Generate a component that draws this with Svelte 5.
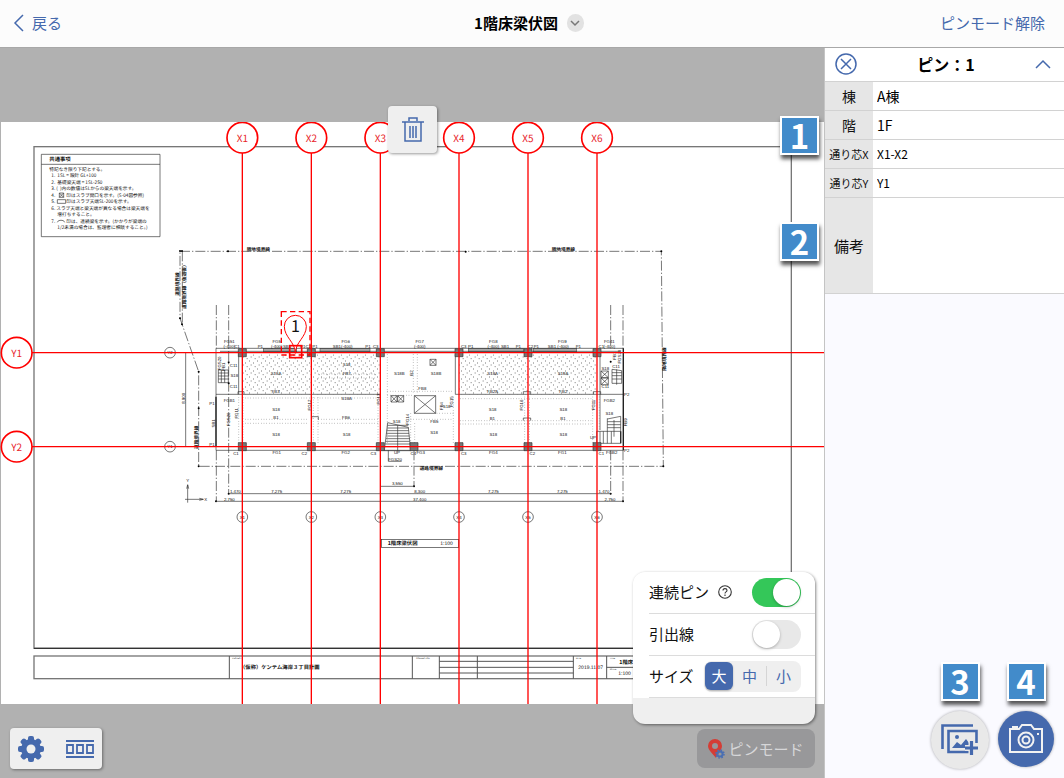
<script>
  let title = '1階床梁伏図';
  let pin = { building: 'A棟', floor: '1F', x: 'X1-X2', y: 'Y1', memo: '' };
  let repeatPin = true;
  let leader = false;
  let size = '大';
  const sizes = ['大', '中', '小'];

  // the sheet is drawn in thirds of a pixel
  const gridX = [727, 934, 1141, 1377, 1584, 1791];
  const gridY = [1058, 1340];

  const notes = [
    [148, '特記なき限り下記とする。'],
    [154, '1.  1SL = 設計 GL+100'],
    [154, '2.  基礎梁天端 = 1SL-250'],
    [154, '3. (  )内の数値はSLからの梁天端を示す。'],
    [154, '4.'],
    [154, '5.'],
    [154, '6. スラブ天端と梁天端が異なる場合は梁天端を'],
    [172, '増打ちすること。'],
    [154, '7.'],
    [172, '1/2未満の場合は、監理者に相談すること。)']
  ];

  const labels = [
    [688, 1030, 'FG51'], [688, 1043, '(-400)'], [711, 1043, 'C1'], [781, 1043, 'P1'],
    [830, 1030, 'FG5'], [830, 1043, '(-400)'], [861, 1043, 'SB1'],
    [908, 1043, 'P1'], [925, 1043, 'C2'], [945, 1043, 'P1'],
    [1037, 1030, 'FG6'], [1028, 1043, 'SB1(-400)'], [1104, 1043, 'P1'], [1127, 1043, 'C3'],
    [1259, 1030, 'FG7'], [1259, 1043, '(-400)'],
    [1391, 1043, 'C3'], [1412, 1043, 'P1'], [1480, 1030, 'FG8'], [1480, 1043, '(-400)'], [1515, 1043, 'SB1'],
    [1555, 1043, 'P1'], [1591, 1043, 'C2'], [1609, 1043, 'P1'],
    [1687, 1030, 'FG9'], [1675, 1043, 'SB1 (-400)'], [1735, 1043, 'P1'], [1804, 1043, 'C1'],
    [1828, 1030, 'FG41'], [1828, 1043, '(-400)'],
    [828, 1125, 'S18A'], [1040, 1098, 'S18'], [1040, 1125, 'FB7'], [1198, 1124, 'S18B'],
    [1308, 1124, 'S18B'], [1478, 1125, 'S18A'], [1689, 1125, 'S18A'],
    [701, 1102, 'C11'], [703, 1130, 'S18'], [701, 1164, 'C11'], [1267, 1170, 'FB8'],
    [827, 1180, 'FB3'], [1040, 1201, 'S18A'], [688, 1205, 'FGB1'], [636, 1214, 'P1'], [636, 1337, 'P1'],
    [828, 1232, 'S18'], [828, 1256, 'B1'], [1038, 1256, 'FB6'], [828, 1307, 'S18'], [1040, 1307, 'S18'],
    [1190, 1268, 'S18'], [1303, 1269, 'FB5'], [1302, 1301, 'S18'], [1340, 1225, 'S18'],
    [1478, 1180, 'FB2A'], [1690, 1180, 'FB2'], [1478, 1233, 'S18'], [1690, 1233, 'S18'],
    [1477, 1259, 'B1'], [1689, 1259, 'B1'], [1480, 1309, 'S18'], [1690, 1309, 'S18'],
    [1828, 1207, 'FGB2'], [1828, 1246, 'S18'], [1848, 1103, 'C11'], [1816, 1111, 'S18'], [1816, 1164, 'C11'],
    [1880, 1188, 'P2'], [1880, 1356, 'P2'], [1779, 1317, 'UP'],
    [708, 1364, 'C1'], [830, 1363, 'FG1'], [913, 1364, 'C2'], [1037, 1363, 'FG2'], [1120, 1364, 'C3'],
    [1191, 1363, 'UP'], [1185, 1382, 'FGS20'], [1240, 1364, 'C4'], [1262, 1363, 'FG3'],
    [1391, 1364, 'C3'], [1480, 1363, 'FG4'], [1597, 1364, 'C2'], [1687, 1363, 'FG1'], [1804, 1364, 'C1'], [1835, 1363, 'FGB2'],
    [706, 1479, '1,470'], [830, 1479, '7,275'], [1037, 1479, '7,275'], [1192, 1456, '3,550'], [1259, 1479, '8,300'],
    [1480, 1479, '7,275'], [1687, 1479, '7,275'], [1812, 1479, '1,470'],
    [688, 1502, '2,750'], [1259, 1502, '37,400'], [1830, 1502, '2,750'],
    [563, 1445, 'Y'], [617, 1503, 'X']
  ];

  const upright = [
    [664, 1090, 'FGS20'], [676, 1100, 'FB1'], [1240, 1119, 'B2'], [933, 1215, 'FG12'], [1139, 1197, 'FG13'], [714, 1240, 'FG11'],
    [689, 1258, 'FGS20'], [644, 1270, 'SB1'], [554, 1195, '8,900'], [1228, 1258, 'FG14'], [1359, 1205, 'FG15'],
    [1570, 1215, 'FG16'], [1784, 1215, 'FG11'], [1329, 1218, 'FB4'], [1881, 1267, 'FB9'], [1849, 1067, 'FB1'], [1864, 1070, 'FGS20']
  ];

  const cols = [...gridX.flatMap(x => gridY.map(y => [x, y])), [1242, 1340]];
  const beams = [[790, 100], [960, 150], [1405, 165], [1600, 130]];
  const dots = [
    [727, 1194, 1140, 1194], [727, 1258, 927, 1258], [727, 1270, 927, 1270], [955, 1258, 1134, 1258], [955, 1270, 1134, 1270],
    [716, 1183, 716, 1330], [729, 1183, 729, 1330], [940, 1183, 940, 1330], [954, 1183, 954, 1330], [1134, 1183, 1134, 1330],
    [955, 1122, 1130, 1122], [955, 1134, 1130, 1134],
    [1162, 1063, 1162, 1330], [1240, 1063, 1240, 1180], [1252, 1063, 1252, 1180], [1162, 1174, 1360, 1174], [1162, 1186, 1240, 1186],
    [1232, 1258, 1360, 1258], [1232, 1240, 1232, 1330], [1244, 1270, 1244, 1330], [1360, 1190, 1360, 1330], [1310, 1240, 1360, 1240],
    [1380, 1196, 1780, 1196], [1380, 1262, 1780, 1262], [1380, 1272, 1780, 1272],
    [1574, 1190, 1574, 1330], [1588, 1190, 1588, 1330], [1778, 1190, 1778, 1330], [1798, 1190, 1798, 1290]
  ];
  const crossed = [[1173, 1187, 18, 19], [1193, 1187, 18, 19], [1290, 1078, 18, 18], [1243, 1187, 64, 53], [1803, 1113, 22, 20], [1803, 1134, 22, 20]];
  const steps = [1276, 1284, 1292, 1300, 1308, 1316, 1324, 1332, 1340];
</script>

<svelte:head>
  <title>{title}</title>
</svelte:head>

<div class="app" lang="ja">
  <header>
    <button class="back" type="button">
      <svg width="12" height="20" viewBox="0 0 12 20"><path d="M10 2 2 10l8 8" /></svg>
      戻る
    </button>
    <h1>
      {title}
      <button class="more" type="button" aria-label="図面を選択">
        <svg width="10" height="8" viewBox="0 0 10 8"><path d="m1 2 4 4 4-4" /></svg>
      </button>
    </h1>
    <button class="end" type="button">ピンモード解除</button>
  </header>

  <main>
    <section class="viewer">
      <svg class="sheet" viewBox="0 366 2472 1746">
        <defs>
          <pattern id="slab" width="24" height="24" patternUnits="userSpaceOnUse">
            <path d="M3 3h3M15 9h3M8 15h3M20 20h3" stroke="#777" stroke-width="3" />
          </pattern>
        </defs>
        <rect x="3" y="366" width="2469" height="1746" fill="#fff" />

        <!-- frame and title block -->
        <g class="frame">
          <rect x="102" y="440" width="2272" height="1505" />
          <path d="M102 1945H2374" class="dark" />
          <rect x="102" y="1968" width="2272" height="68" />
          <path class="thin" d="M688 1968v68M1237 1968v68M1318 1968v68M1432 1968v68M1720 1968v68M1820 1968v68M1318 1984h402M1318 2002h402M1318 2019h402M1820 2002h554" />
        </g>
        <g class="t16">
          <text x="720" y="2007">（仮称）ケンテム海岸３丁目計画</text>
          <text x="1735" y="2007" class="num">2019.11.07</text>
          <text x="1858" y="1991">1階床梁伏図</text>
          <text x="1855" y="2024" class="num">1:100</text>
          <text x="1163" y="1636">1階床梁伏図</text>
          <text x="1321" y="1635" class="num">1:100</text>
        </g>
        <g class="t6">
          <text x="697" y="1976">PROJECT</text>
          <text x="1249" y="1976">CORRECTION</text>
          <text x="1728" y="1976">DATE</text>
          <text x="1829" y="1976">TITLE</text>
          <text x="1829" y="2010">SCALE</text>
        </g>
        <rect class="ink" x="1144" y="1618" width="232" height="24" />

        <!-- common notes -->
        <path class="ink" d="M124 463h356v247H124zM124 493h356" />
        <g class="t14">
          <text x="148" y="484" class="t16">共通事項</text>
          {#each notes as [x, line], i}
            <text {x} y={512 + i * 20 - Math.round(i / 2)}>{line}</text>
          {/each}
          <text x="199" y="590">印はスラブ開口を示す。(S-04図参照)</text>
          <text x="199" y="610">印はスラブ天端SL-200を示す。</text>
          <text x="199" y="668">印は、連続梁を示す。(かかりが梁端の</text>
        </g>
        <path class="ink" d="M178 579h13v13h-13zl13 13M191 579l-13 13M172 599h25v11h-25zM172 667q2-6 8-6h6q6 0 8 6" />

        <!-- site boundary -->
        <g class="boundary">
          <path d="M540 754H1984L1990 1399H596V1115L540 955V754M547 754V973" />
          <path d="M649 915V1045M649 1351V1504M686 915V1481M1832 915V1045M1869 915V1045M1832 1351V1481M1869 1351V1504M1242 1351V1459" />
        </g>
        <g>
          {#each [[540, 753], [546, 753], [684, 754], [1397, 755], [1984, 754], [540, 955], [546, 973], [596, 1115], [596, 1225], [596, 1399], [1990, 1399], [648, 1504], [686, 1481], [1869, 1504], [1832, 1481], [1242, 1459], [686, 1087], [686, 1150], [1832, 1085]] as [cx, cy]}
            <circle {cx} {cy} r="3" />
          {/each}
        </g>
        <g class="t14 mid bold">
          <text x="775" y="752">隣地境界線</text>
          <text x="1690" y="753">隣地境界線</text>
          <text x="1294" y="1410">道路境界線</text>
          <text transform="translate(538 852) rotate(-90)">道路境界線</text>
          <text transform="translate(559 857) rotate(-90)">道路境界線（後退後）</text>
          <text transform="translate(593 1312) rotate(-90)">道路境界線</text>
          <text transform="translate(1999 1077) rotate(-90)">隣地境界線</text>
        </g>

        <!-- building -->
        <rect x="727" y="1063" width="414" height="120" fill="url(#slab)" />
        <rect x="1377" y="1063" width="414" height="120" fill="url(#slab)" />
        <g class="beam">
          {#each beams as [x, width]}
            <rect {x} y="1045" {width} height="10" />
          {/each}
        </g>
        <path class="ink" d="M648 1045H1870V1351H648zM660 1054H1862M648 1183H1140M1366 1183H1870M1366 1063V1183M716 1054V1183M1800 1063V1290" />
        <path class="wall" d="M648 1190V1340M1870 1045V1351M1862 1294V1330" />
        <path class="ink" d="M714 1183v-8h18v8M935 1258v-8h20v10M1570 1183v-8h22v8M1570 1262v-8h22v8M1780 1183v-8h22v8" />
        <g class="dotted">
          {#each dots as [x1, y1, x2, y2]}
            <line {x1} {y1} {x2} {y2} />
          {/each}
        </g>
        <g class="ink">
          {#each crossed as [x, y, w, h]}
            <path d="M{x} {y}h{w}v{h}h-{w}zl{w} {h}M{x + w} {y}l-{w} {h}" />
          {/each}
          <path d="M1163 1268 1225 1282 1232 1352H1153zM1193 1276V1352" />
          {#each steps as y}
            <path d="M{1163 - Math.round((y - 1268) / 9)} {y}H{1225 + Math.round((y - 1276) / 11)}" />
          {/each}
          <path d="M1790 1294h72v36h-72zM1800 1294v36M1810 1294v36M1822 1255v75M1834 1294v36M1822 1257l40-8v45M1822 1265h40M1822 1274h40M1822 1283h40M1842 1260v50" />
          <path d="M1836 1108l29 4v38h-29zM1836 1118h29M1836 1127h29M1836 1137h29M1850 1108v46" />
          <path d="M655 1110h30v38h-30zM655 1119h30M655 1128h30M655 1137h30M664 1110v38M674 1110v38" />
          <path d="M1165 1351v33h40" />
        </g>
        {#each cols as [x, y]}
          <rect class="col" x={x - 12} y={y - 12} width="24" height="24" />
          <path class="ink" d="M{x - 12} {y - 12}h24v24h-24z" />
        {/each}

        <!-- dimensions -->
        <path class="ink" d="M686 1481H1832M648 1504H1869M1141 1459H1242M557 1057V1340M563 1508V1455M555 1498H610M560 1466l3-12 3 12M598 1495l12 3-12 3" />
        <g class="t13 mid">
          {#each labels as [x, y, label]}
            <text {x} {y}>{label}</text>
          {/each}
          {#each upright as [x, y, label]}
            <text transform="translate({x} {y}) rotate(-90)">{label}</text>
          {/each}
          {#each gridX as cx, i}
            <circle class="ink" {cx} cy="1551" r="16" />
            <text x={cx} y="1556">X{i + 1}</text>
          {/each}
          {#each gridY as cy, i}
            <circle class="ink" cx="510" {cy} r="16" />
            <text x="510" y={cy + 5}>Y{2 - i}</text>
          {/each}
        </g>

        <!-- grid lines -->
        <g class="grid">
          {#each gridX as x, i}
            <path d="M{x} 458V2112" />
            <circle cx={x} cy="413" r="46" />
            <text {x} y="425">X{i + 1}</text>
          {/each}
          {#each gridY as y, i}
            <path d="M96 {y}H2472" />
            <circle cx="50" cy={y} r="46" />
            <text x="50" y={y + 12}>Y{i + 1}</text>
          {/each}
        </g>

        <!-- pin -->
        <g class="pin">
          <rect class="area" x="844" y="935" width="86" height="130" />
          <path d="M886 1060C886 1026 853 1012 853 979a33 33 0 0 1 66 0C919 1012 886 1026 886 1060z" />
          <rect x="869" y="1037" width="36" height="36" />
          <text x="886" y="995">1</text>
        </g>
      </svg>

      <button class="trash" type="button" aria-label="削除">
        <svg width="22" height="26" viewBox="0 0 22 26"><path d="M0 5h22M7 4V1h8v3M3 5v19h16V5M8 9v12M11 9v12M14 9v12" /></svg>
      </button>

      <div class="tools">
        <button type="button" aria-label="設定">
          <svg width="26" height="26" viewBox="-13 -13 26 26">
            {#each [0, 45, 90, 135] as deg}
              <rect x="-3" y="-13" width="6" height="26" rx="2" transform="rotate({deg})" />
            {/each}
            <circle r="10" />
            <circle r="4.500" fill="#efefef" />
          </svg>
        </button>
        <button type="button" aria-label="図面一覧">
          <svg width="28" height="18" viewBox="0 0 28 18">
            <path d="M0 1h28M0 17h28M1 5h6v8H1zM11 5h6v8h-6zM21 5h6v8h-6z" fill="none" stroke="#4569ad" stroke-width="1.800" />
          </svg>
        </button>
      </div>

      <div class="corner">
        <div class="options">
          <div class="row">
            <label for="repeat">連続ピン</label>
            <button class="help" type="button" aria-label="ヘルプ">
              <svg width="14" height="14" viewBox="0 0 14 14"><circle cx="7" cy="7" r="6.300" /><path d="M5 5.600q0-2 2-2t2 1.700q0 1-1 1.600T7 8.600M7 9.600v1.300" /></svg>
            </button>
            <input class="switch" id="repeat" type="checkbox" bind:checked={repeatPin}>
          </div>
          <div class="row">
            <label for="leader">引出線</label>
            <input class="switch" id="leader" type="checkbox" bind:checked={leader}>
          </div>
          <div class="row">
            <span id="size">サイズ</span>
            <div class="sizes" role="radiogroup" aria-labelledby="size">
              {#each sizes as s}
                <label class:on={size === s}>
                  <input type="radio" name="size" value={s} bind:group={size}>{s}
                </label>
              {/each}
            </div>
          </div>
        </div>
        <button class="mode" type="button">
          <svg width="17" height="20" viewBox="0 0 17 20">
            <path fill="#d43d35" fill-rule="evenodd" d="M7 0a7 7 0 0 1 7 7c0 5-6 9-6 12C5 15 0 11 0 7a7 7 0 0 1 7-7zm0 4a3 3 0 1 0 0 6 3 3 0 0 0 0-6z" />
            <circle cx="12" cy="15" r="2.600" fill="none" stroke="#4a6fb3" stroke-width="2" />
            <circle cx="12" cy="15" r="4" fill="none" stroke="#4a6fb3" stroke-width="1.500" stroke-dasharray="1.600 1.540" />
          </svg>
          ピンモード
        </button>
      </div>
    </section>

    <aside>
      <div class="head">
        <button type="button" aria-label="閉じる">
          <svg width="22" height="22" viewBox="0 0 22 22"><circle cx="11" cy="11" r="10" /><path d="m6 6 10 10M16 6 6 16" /></svg>
        </button>
        <h2>ピン：1</h2>
        <button type="button" aria-label="折りたたむ">
          <svg width="16" height="10" viewBox="0 0 16 10"><path d="m1 9 7-7 7 7" /></svg>
        </button>
      </div>
      <form>
        <label for="building">棟</label>
        <input id="building" bind:value={pin.building}>
        <label for="floor">階</label>
        <input id="floor" bind:value={pin.floor}>
        <label class="small" for="posx">通り芯X</label>
        <input class="pos" id="posx" bind:value={pin.x}>
        <label class="small" for="posy">通り芯Y</label>
        <input class="pos" id="posy" bind:value={pin.y}>
        <label class="memo" for="memo">備考</label>
        <textarea id="memo" bind:value={pin.memo}></textarea>
      </form>

      <span class="badge over first">1</span>
      <span class="badge over second">2</span>

      <div class="actions">
        <div class="action">
          <span class="badge">3</span>
          <button class="round" type="button" aria-label="写真を追加">
            <svg width="38" height="32" viewBox="0 0 38 32">
              <path d="M1.500 25V1.500H32M28 28H7.500V7H35.500V19" fill="none" stroke="#4569ad" stroke-width="2.600" />
              <circle cx="16" cy="13" r="2" fill="#4569ad" />
              <path d="m11 24 5-6 4 3 5-6 3 4v5z" fill="#4569ad" />
              <path d="M30.500 17v14M24 24h13" stroke="#e9e9e9" stroke-width="6" />
              <path d="M30.500 17v14M24 24h13" stroke="#4569ad" stroke-width="3.200" />
            </svg>
          </button>
        </div>
        <div class="action">
          <span class="badge">4</span>
          <button class="round camera" type="button" aria-label="撮影">
            <svg width="34" height="30" viewBox="0 0 34 30" fill="none" stroke="#f2f2f2" stroke-width="2">
              <path d="M1 5h9l3-4h9l3 4h8v23H1zM4 5V3h4v2" />
              <circle cx="17" cy="16" r="7.500" />
              <circle cx="17" cy="16" r="3.500" />
              <path d="M28 10h2" />
            </svg>
          </button>
        </div>
      </div>
    </aside>
  </main>
</div>

<style>
  :global(body) {
    background: #fafaff;
  }

  .app {
    display: flex;
    flex-direction: column;
    min-height: 100vh;
    font-family: "Noto Sans CJK JP", sans-serif;
    font-size: 15px;
    line-height: 20px;
    color: #111;
  }

  .app *, .app {
    box-sizing: border-box;
  }

  button {
    display: flex;
    align-items: center;
    justify-content: center;
    padding: 0;
    border: 0;
    background: none;
    font: inherit;
    color: #4569ad;
    cursor: pointer;
  }

  header {
    display: grid;
    grid-template-columns: 1fr auto 1fr;
    align-items: center;
    height: 47px;
    padding: 0 19px 2px 13px;
    background: #fcfcfc;
  }

  h1, h2 {
    margin: 0;
    font-size: 15px;
    font-weight: 700;
    color: #000;
  }

  h1 {
    display: flex;
    align-items: center;
    gap: 9px;
  }

  .back {
    justify-self: start;
    gap: 7px;
  }

  .end {
    justify-self: end;
  }

  .back svg, .more svg, .trash svg, .help svg, .head svg {
    fill: none;
    stroke: #4569ad;
    stroke-width: 1.5;
  }

  .more {
    width: 17px;
    height: 18px;
    border-radius: 9px;
    background: #e2e2e2;
  }

  .more svg {
    stroke: #777;
  }

  main {
    display: flex;
    flex: 1;
    border-top: 1px solid #a8a8a8;
  }

  .viewer {
    position: relative;
    display: flex;
    align-items: center;
    flex: 1;
    min-width: 0;
    background: #b1b1b1;
  }

  .sheet {
    display: block;
    width: 100%;
    text-rendering: geometricPrecision;
  }

  .sheet text {
    fill: #111;
  }

  .frame rect, .frame path {
    fill: none;
    stroke: #777;
    stroke-width: 4;
  }

  .frame .dark {
    stroke: #333;
  }

  .frame .thin {
    stroke: #555;
    stroke-width: 3;
  }

  .ink {
    fill: none;
    stroke: #333;
    stroke-width: 2;
  }

  .wall {
    fill: none;
    stroke: #222;
    stroke-width: 4;
  }

  .boundary path {
    fill: none;
    stroke: #333;
    stroke-width: 2;
    stroke-dasharray: 30 6 4 6;
  }

  .beam rect {
    fill: #aaa;
    stroke: #555;
    stroke-width: 2;
  }

  .col {
    fill: #777;
  }

  .dotted line {
    stroke: #777;
    stroke-width: 2;
    stroke-dasharray: 2 6;
  }

  .t16 { font-size: 16px; font-weight: 700; }
  .t14 { font-size: 14px; }
  .t13 { font-size: 13px; }
  .t6 { font-size: 6px; }
  .mid { text-anchor: middle; }
  .bold { font-weight: 700; }

  .t13, .t6, .num {
    font-family: "Liberation Sans", sans-serif;
    font-weight: 400;
  }

  .num {
    font-size: 15px;
  }

  .t14 text, .t16 text {
    white-space: pre;
  }

  .grid path, .grid circle {
    fill: none;
    stroke: #f00;
    stroke-width: 4;
  }

  .grid circle {
    fill: #fff;
    stroke-width: 5;
  }

  .grid text {
    font-size: 30px;
    text-anchor: middle;
    fill: #e8252b;
  }

  .pin rect, .pin path {
    fill: none;
    stroke: #f00;
    stroke-width: 5;
  }

  .pin path {
    fill: #fff;
    stroke-width: 3;
  }

  .pin .area {
    stroke-width: 4;
    stroke-dasharray: 16 10;
  }

  .pin text {
    font-size: 48px;
    text-anchor: middle;
  }

  .trash {
    position: absolute;
    top: 58px;
    left: 388px;
    width: 49px;
    height: 47px;
    border-radius: 4px;
    background: #efefef;
    box-shadow: 1px 1px 3px #0006;
  }

  .tools {
    position: absolute;
    left: 10px;
    bottom: 9px;
    display: flex;
    justify-content: space-between;
    width: 92px;
    height: 41px;
    padding: 0 8px;
    border-radius: 4px;
    background: #efefef;
    box-shadow: 1px 1px 3px #0006;
  }

  .tools svg {
    fill: #4569ad;
  }

  .corner {
    position: absolute;
    right: 9px;
    bottom: 10px;
    display: flex;
    flex-direction: column;
    align-items: flex-end;
    gap: 5px;
  }

  .options {
    width: 182px;
    padding-bottom: 26px;
    border-radius: 12px;
    background: #efefef;
    box-shadow: 1px 1px 3px #0007;
    overflow: hidden;
  }

  .row {
    display: flex;
    align-items: center;
    height: 42px;
    padding: 0 14px 2px 16px;
    background: linear-gradient(#dcdcdc, #dcdcdc) 16px 100% / 100% 1px no-repeat #fff;
  }

  .help {
    margin-left: 9px;
  }

  .help svg {
    stroke: #333;
    stroke-width: 1.1;
  }

  .switch {
    appearance: none;
    display: flex;
    align-items: center;
    width: 49px;
    height: 29px;
    margin: 0 0 0 auto;
    padding: 1px;
    border-radius: 15px;
    background: #e8e8e8;
  }

  .switch::before {
    content: "";
    width: 27px;
    height: 27px;
    border-radius: 50%;
    background: #fff;
    box-shadow: 0 1px 3px #0004;
  }

  .switch:checked {
    justify-content: flex-end;
    background: #34c759;
  }

  .sizes {
    display: flex;
    align-items: center;
    width: 97px;
    height: 31px;
    margin-left: auto;
    padding: 2px 1px;
    border-radius: 8px;
    background: #efefef;
  }

  .sizes label {
    flex: 1;
    text-align: center;
    color: #4569ad;
  }

  .sizes label:last-child {
    border-left: 1px solid #d5d5d5;
  }

  .sizes .on {
    flex: 0 0 28px;
    padding: 4px 0;
    border-radius: 6px;
    background: #4569ad;
    color: #fff;
    box-shadow: 0 1px 2px #0004;
  }

  .sizes input {
    position: absolute;
    opacity: 0;
    pointer-events: none;
  }

  .mode {
    gap: 3px;
    width: 118px;
    height: 39px;
    border-radius: 8px;
    background: #98989a;
    color: #d6d6d8;
  }

  aside {
    position: relative;
    display: flex;
    flex-direction: column;
    width: 240px;
    border-left: 1px solid #c4c4c4;
    background: #fafaff;
  }

  .head {
    display: flex;
    align-items: center;
    justify-content: space-between;
    height: 34px;
    padding: 0 13px 2px 10px;
    border-bottom: 1px solid #d2d2d2;
    background: #fff;
  }

  h2 {
    font-size: 16px;
  }

  form {
    display: grid;
    grid-template-columns: 48px 1fr;
    grid-template-rows: repeat(4, 29px) 96px;
  }

  form label {
    display: flex;
    align-items: center;
    justify-content: center;
    border-bottom: 1px solid #d2d2d2;
    background: #e6e6e6;
    font-size: 14px;
  }

  form .small {
    font-size: 11px;
  }

  form .memo {
    font-size: 15px;
  }

  form input, textarea {
    min-width: 0;
    margin: 0;
    padding: 0 4px;
    border: 0;
    border-bottom: 1px solid #d2d2d2;
    border-radius: 0;
    background: #fff;
    font: inherit;
    font-size: 14px;
    color: #000;
    outline: 0;
    resize: none;
  }

  form .pos {
    font-size: 12px;
  }

  .badge {
    display: flex;
    align-items: center;
    justify-content: center;
    width: 39px;
    height: 39px;
    border: 2px solid #fff;
    background: #428bca;
    box-shadow: 1px 4px 4px #000a;
    font-size: 33px;
    font-weight: 700;
    line-height: 35px;
    color: #fff;
  }

  .over {
    position: absolute;
    left: -45px;
  }

  .first {
    top: 68px;
  }

  .second {
    top: 174px;
  }

  .actions {
    display: flex;
    justify-content: flex-end;
    gap: 9px;
    margin-top: auto;
    padding: 0 10px 9px;
  }

  .action {
    display: flex;
    flex-direction: column;
    align-items: center;
    gap: 10px;
  }

  .round {
    width: 58px;
    height: 58px;
    border-radius: 50%;
    background: #e9e9e9;
    box-shadow: 0 0 3px #0005;
  }

  .camera {
    width: 56px;
    height: 56px;
    background: #4569ad;
  }
</style>
